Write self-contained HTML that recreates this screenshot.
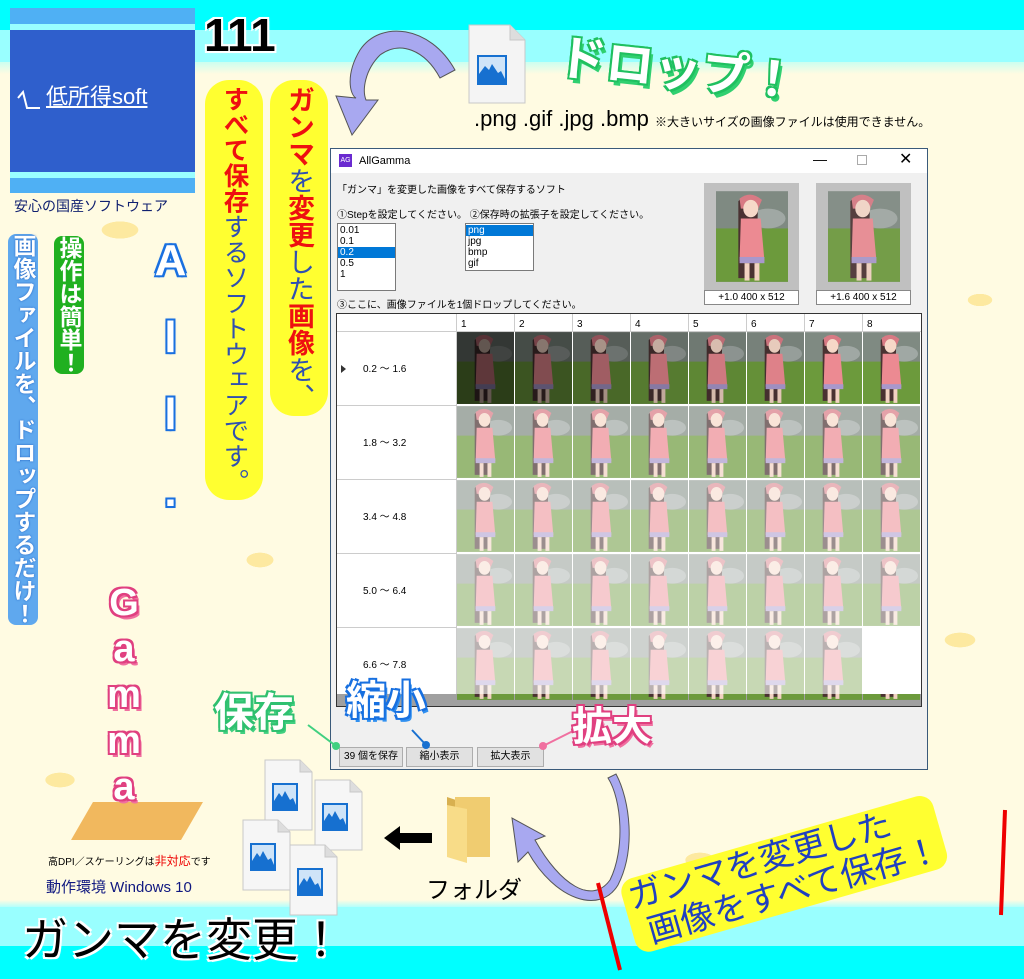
<!DOCTYPE html>
<html><head><meta charset="utf-8"><style>
*{margin:0;padding:0;box-sizing:border-box}
body{width:1024px;height:979px;overflow:hidden;position:relative;font-family:"Liberation Sans","Noto Sans CJK JP",sans-serif;
background:
radial-gradient(ellipse 30px 14px at 120px 230px,#fde9a0 60%,transparent 62%),
radial-gradient(ellipse 20px 10px at 980px 300px,#fde9a0 60%,transparent 62%),
radial-gradient(ellipse 25px 12px at 960px 640px,#fde9a0 60%,transparent 62%),
radial-gradient(ellipse 22px 12px at 260px 560px,#fde9a0 60%,transparent 62%),
radial-gradient(ellipse 24px 12px at 700px 860px,#fde9a0 60%,transparent 62%),
radial-gradient(ellipse 24px 12px at 60px 780px,#fde9a0 60%,transparent 62%),
#fffbe2;}
.a{position:absolute}
.v{writing-mode:vertical-rl;text-orientation:upright;font-weight:bold}
.win{font-family:"Liberation Sans","Noto Sans CJK JP",sans-serif;font-size:10px;color:#000}
.lb{background:#fff;border:1px solid #7a7a7a;font-size:10px;line-height:11px;padding:1px 2px}
.btn{background:#e1e1e1;border:1px solid #adadad;font-size:10px;text-align:center;line-height:18px;height:20px}
.n{color:#3050b0;font-weight:normal}
</style></head><body>
<div class="a" style="left:0;top:0;width:1024px;height:30px;background:#00ffff"></div>
<div class="a" style="left:0;top:30px;width:1024px;height:32px;background:#99ffff"></div>
<div class="a" style="left:0;top:62px;width:1024px;height:12px;background:linear-gradient(#ccfff0,#fffbe2)"></div>
<div class="a" style="left:0;top:900px;width:1024px;height:8px;background:linear-gradient(#fffbe2,#aaffff)"></div>
<div class="a" style="left:0;top:907px;width:1024px;height:40px;background:#99ffff"></div>
<div class="a" style="left:0;top:946px;width:1024px;height:33px;background:#00ffff"></div>

<div class="a" style="left:10px;top:8px;width:185px;height:185px;background:#2f5fcc"></div>
<div class="a" style="left:10px;top:8px;width:185px;height:16px;background:#4fb0f4"></div>
<div class="a" style="left:10px;top:24px;width:185px;height:6px;background:#99ffff"></div>
<div class="a" style="left:10px;top:172px;width:185px;height:6px;background:#99ffff"></div>
<div class="a" style="left:10px;top:178px;width:185px;height:15px;background:#4fb0f4"></div>
<svg class="a" style="left:16px;top:88px" width="26" height="26"><path d="M2 10L7 4L11 20H24" fill="none" stroke="#fff" stroke-width="2"/></svg>
<div class="a" style="left:46px;top:84px;color:#fff;font-size:22px;line-height:26px;white-space:nowrap;text-decoration:underline">低所得soft</div>
<div class="a" style="left:14px;top:196px;color:#102070;font-size:14px;white-space:nowrap">安心の国産ソフトウェア</div>
<div class="a" style="left:204px;top:8px;font-size:46px;font-weight:bold;color:#000;text-shadow:0 0 3px #fff,2px 2px 0 #fff,-2px -2px 0 #fff,2px -2px 0 #fff,-2px 2px 0 #fff">111</div>

<div class="a v" style="left:270px;top:80px;width:58px;font-size:27px;line-height:58px;background:#ffff30;border-radius:24px;padding:6px 0;color:#ee1010">ガンマ<span class="n">を</span>変更<span class="n">した</span>画像<span class="n">を、</span></div>
<div class="a v" style="left:205px;top:80px;width:58px;font-size:25.5px;line-height:58px;background:#ffff30;border-radius:24px;padding:6px 0;color:#ee1010">すべて保存<span class="n">するソフトウェアです。</span></div>
<div class="a v" style="left:8px;top:234px;font-size:23px;line-height:30px;color:#fff;background:#5fa8ee;border-radius:8px;text-shadow:0 0 2px #2060c0">画像ファイルを、ドロップするだけ！</div>
<div class="a v" style="left:54px;top:236px;font-size:23px;line-height:30px;color:#fff;background:#20b020;border-radius:8px">操作は簡単！</div>
<div class="a v" style="left:148px;top:236px;font-size:44px;line-height:44px;color:#fff;text-shadow:0 0 3px #1a70e0,2px 2px 0 #1a70e0,-2px -2px 0 #1a70e0,2px -2px 0 #1a70e0,-2px 2px 0 #1a70e0;letter-spacing:28px">All.</div>
<div class="a" style="left:82px;top:802px;width:110px;height:38px;background:#f0b050;transform:skewX(-30deg);opacity:.9"></div>
<div class="a v" style="left:104px;top:582px;font-size:38px;line-height:40px;color:#fff;text-shadow:0 0 2px #e04080,2px 2px 0 #e04080,-2px -2px 0 #e04080,2px -2px 0 #e04080,-2px 2px 0 #e04080,3px 4px 0 #f070a0;letter-spacing:4px">Gamma</div>

<div class="a" style="left:48px;top:852px;font-size:10px;white-space:nowrap">高DPI／スケーリングは<span style="color:#e00;font-size:12px">非対応</span>です</div>
<div class="a" style="left:46px;top:876px;font-size:15px;color:#101880;white-space:nowrap">動作環境 Windows 10</div>
<div class="a" style="left:22px;top:912px;font-size:46px;line-height:56px;color:#000;white-space:nowrap;text-shadow:0 0 3px #fff,2px 2px 0 #fff,-2px -2px 0 #fff,2px -2px 0 #fff,-2px 2px 0 #fff">ガンマを変更！</div>

<svg class="a" style="left:468px;top:24px" width="58" height="80" viewBox="0 0 58 80"><path d="M1 1H42L57 16V79H1Z" fill="#f4f4f4" stroke="#c8c8c8"/><path d="M42 1V16H57" fill="#ddd" stroke="#c8c8c8"/><rect x="9" y="31" width="30" height="30" fill="#1670d0"/><rect x="11" y="33" width="26" height="26" fill="#cfe4f8"/><path d="M11 59L11 50L17 42L21 46L24 40L30 49L33 47L37 55V59Z" fill="#1670d0"/></svg>
<div class="a" style="left:558px;top:30px;font-size:48px;font-weight:bold;color:#fff;transform:rotate(6deg);white-space:nowrap;text-shadow:0 0 2px #20c060,2px 2px 0 #20c060,-2px -2px 0 #20c060,2px -2px 0 #20c060,-2px 2px 0 #20c060,4px 5px 0 #30d070">ドロップ！</div>
<div class="a" style="left:474px;top:106px;font-size:22px;white-space:nowrap">.png .gif .jpg .bmp <span style="font-size:12px">※大きいサイズの画像ファイルは使用できません。</span></div>

<svg class="a" style="left:0;top:0" width="1024" height="979">
<path d="M455 70C430 25 380 20 360 50C345 75 350 95 356 98L336 96L352 135L378 100L366 100C362 90 365 70 380 55C400 40 425 50 440 78Z" fill="#a8a8f0" stroke="#555" stroke-width="1"/>
<path d="M608 778C622 800 625 850 610 880C592 905 560 885 535 840L545 836L512 818L518 862L528 852C555 900 600 915 618 885C636 850 630 800 616 774Z" fill="#a8a8f0" stroke="#555" stroke-width="1"/>
<path d="M598 883L620 970" stroke="#e00" stroke-width="4"/>
<path d="M1005 810L1001 915" stroke="#e00" stroke-width="4"/>
<path d="M384 838L400 826V833H432V843H400V850Z" fill="#000"/>
</svg>

<svg class="a" style="left:240px;top:755px" width="140" height="165" viewBox="0 0 140 165">
<g id="fi"><path d="M25 5H60L72 17V75H25Z" fill="#f6f6f6" stroke="#c8c8c8"/><path d="M60 5V17H72" fill="#ddd" stroke="#c8c8c8"/><rect x="32" y="28" width="26" height="28" fill="#1670d0"/><rect x="34" y="30" width="22" height="24" fill="#cfe4f8"/><path d="M34 54V46L39 38L42 42L45 36L50 45L53 43L56 50V54Z" fill="#1670d0"/></g>
<use href="#fi" x="50" y="20"/><use href="#fi" x="-22" y="60"/><use href="#fi" x="25" y="85"/>
</svg>
<svg class="a" style="left:445px;top:795px" width="50" height="70"><path d="M2 2L20 8V66L2 58Z" fill="#d8b050"/><path d="M10 2H45V62H10Z" fill="#f0cc70"/><path d="M2 10L22 14V68L2 62Z" fill="#f8dc88"/></svg>
<div class="a" style="left:426px;top:870px;font-size:24px;white-space:nowrap">フォルダ</div>

<div class="a" style="left:618px;top:882px;font-size:34px;line-height:38px;color:#2040c0;transform:rotate(-16deg);transform-origin:left top;background:#ffff30;border-radius:14px;padding:0 6px;white-space:nowrap">ガンマを変更した<br>&nbsp;画像をすべて保存！</div>

<div class="a win" style="left:330px;top:148px;width:598px;height:622px;background:#f0f0f0;border:1px solid #3a5a7a">
 <div class="a" style="left:0;top:0;width:596px;height:24px;background:#fff"></div>
 <div class="a" style="left:8px;top:5px;width:13px;height:13px;background:#6a2ad0;color:#fff;font-size:7px;line-height:13px;text-align:center">AG</div>
 <div class="a" style="left:28px;top:6px;font-size:11px">AllGamma</div>
 <div class="a" style="left:482px;top:2px;font-size:14px">—</div>
 <div class="a" style="left:526px;top:6px;width:10px;height:10px;border:1px solid #aaa"></div>
 <div class="a" style="left:568px;top:0px;font-size:16px">✕</div>
 <div class="a" style="left:6px;top:32px">「ガンマ」を変更した画像をすべて保存するソフト</div>
 <div class="a" style="left:6px;top:57px;white-space:nowrap">①Stepを設定してください。 ②保存時の拡張子を設定してください。</div>
 <div class="a lb" style="left:6px;top:74px;width:59px;height:68px">0.01<br>0.1<br><div style="background:#0078d7;color:#fff;margin:0 -2px;padding:0 2px">0.2</div>0.5<br>1</div>
 <div class="a lb" style="left:134px;top:74px;width:69px;height:48px"><div style="background:#0078d7;color:#fff;margin:0 -2px;padding:0 2px">png</div>jpg<br>bmp<br>gif</div>
 <div class="a" style="left:6px;top:147px">③ここに、画像ファイルを1個ドロップしてください。</div>
 <svg class="a" style="left:373px;top:34px" width="95" height="107"><rect width="95" height="107" fill="#c0c0c0"/><use href="#girl" x="12" y="0" width="72" height="107"/></svg>
 <svg class="a" style="left:485px;top:34px" width="95" height="107"><rect width="95" height="107" fill="#c0c0c0"/><use href="#girl" x="12" y="0" width="72" height="107" opacity=".9"/></svg>
 <div class="a" style="left:373px;top:141px;width:95px;height:15px;background:#fff;border:1px solid #888;text-align:center;line-height:13px">+1.0 400 x 512</div>
 <div class="a" style="left:485px;top:141px;width:95px;height:15px;background:#fff;border:1px solid #888;text-align:center;line-height:13px">+1.6 400 x 512</div>
 <div class="a" style="left:5px;top:164px;width:586px;height:394px;background:#a0a0a0;border:1px solid #333"></div>
 <svg class="a" style="left:6px;top:165px" width="584" height="392" viewBox="0 0 584 392">
  <defs>
   <symbol id="girl" viewBox="0 0 58 73">
    <rect width="58" height="73" fill="#7f8a82"/><rect y="30" width="58" height="43" fill="#6c9a3c"/>
    <ellipse cx="42" cy="22" rx="14" ry="8" fill="#a0a8a4"/>
    <path d="M18 8Q26 0 34 6L32 70L18 70Z" fill="#4a3232"/>
    <path d="M19 6Q28 -1 37 7L34 14H20Z" fill="#d87a84"/>
    <ellipse cx="28" cy="14" rx="6" ry="7" fill="#f6d8c8"/>
    <path d="M20 22H36L39 56H19Z" fill="#ec8a92"/>
    <rect x="19" y="53" width="20" height="5" fill="#a898cc"/>
    <rect x="23" y="58" width="4" height="14" fill="#f2d2c2"/><rect x="31" y="58" width="4" height="14" fill="#f2d2c2"/>
   </symbol>
  </defs>
  <rect width="584" height="392" fill="#fff"/>
  <rect x="0" y="380" width="584" height="12" fill="#a0a0a0"/>
  <g id="row">
   <use href="#girl" x="120" y="18" width="57" height="72"/><use href="#girl" x="178" y="18" width="57" height="72"/><use href="#girl" x="236" y="18" width="57" height="72"/><use href="#girl" x="294" y="18" width="57" height="72"/><use href="#girl" x="352" y="18" width="57" height="72"/><use href="#girl" x="410" y="18" width="57" height="72"/><use href="#girl" x="468" y="18" width="57" height="72"/><use href="#girl" x="526" y="18" width="57" height="72"/>
  </g>
  <rect x="120" y="18" width="57" height="72" fill="#000" opacity=".6"/><rect x="178" y="18" width="57" height="72" fill="#000" opacity=".45"/><rect x="236" y="18" width="57" height="72" fill="#000" opacity=".32"/><rect x="294" y="18" width="57" height="72" fill="#000" opacity=".2"/><rect x="352" y="18" width="57" height="72" fill="#000" opacity=".12"/><rect x="410" y="18" width="57" height="72" fill="#000" opacity=".06"/>
  <use href="#row" y="74"/><use href="#row" y="148"/><use href="#row" y="222"/><use href="#row" y="296"/>
  <rect x="120" y="92" width="464" height="72" fill="#fff" opacity=".3"/>
  <rect x="120" y="166" width="464" height="72" fill="#fff" opacity=".45"/>
  <rect x="120" y="240" width="464" height="72" fill="#fff" opacity=".55"/>
  <rect x="120" y="314" width="406" height="66" fill="#fff" opacity=".62"/>
  <rect x="526" y="314" width="58" height="66" fill="#fff"/>
  <g stroke="#ccc" stroke-width="1"><path d="M0 17.5H584M0 91.5H120M0 165.5H120M0 239.5H120M0 313.5H120M119.5 0V380M177.5 0V17M235.5 0V17M293.5 0V17M351.5 0V17M409.5 0V17M467.5 0V17M525.5 0V17"/></g>
  <g font-size="10" font-family="Liberation Sans,sans-serif"><text x="124" y="13">1</text><text x="182" y="13">2</text><text x="240" y="13">3</text><text x="298" y="13">4</text><text x="356" y="13">5</text><text x="414" y="13">6</text><text x="472" y="13">7</text><text x="530" y="13">8</text>
  <path d="M4 51L9 55L4 59Z" fill="#333"/>
  <text x="26" y="58">0.2 ～ 1.6</text><text x="26" y="132">1.8 ～ 3.2</text><text x="26" y="206">3.4 ～ 4.8</text><text x="26" y="280">5.0 ～ 6.4</text><text x="26" y="354">6.6 ～ 7.8</text></g>
 </svg>
 <div class="a btn" style="left:8px;top:598px;width:64px">39 個を保存</div>
 <div class="a btn" style="left:75px;top:598px;width:67px">縮小表示</div>
 <div class="a btn" style="left:146px;top:598px;width:67px">拡大表示</div>
</div>

<svg class="a" style="left:0;top:0" width="1024" height="979"><path d="M308 725L336 746" stroke="#40d080" stroke-width="2"/><circle cx="336" cy="746" r="4" fill="#40d080"/><path d="M412 730L426 745" stroke="#1870d0" stroke-width="2"/><circle cx="426" cy="745" r="4" fill="#1870d0"/><path d="M575 730L543 746" stroke="#f070a0" stroke-width="2"/><circle cx="543" cy="746" r="4" fill="#f070a0"/></svg>
<div class="a" style="left:214px;top:680px;font-size:40px;font-weight:bold;color:#fff;white-space:nowrap;text-shadow:0 0 2px #30c070,2px 2px 0 #30c070,-2px -2px 0 #30c070,2px -2px 0 #30c070,-2px 2px 0 #30c070,3px 4px 0 #40d080">保存</div>
<div class="a" style="left:346px;top:668px;font-size:40px;font-weight:bold;color:#fff;white-space:nowrap;text-shadow:0 0 2px #1870e0,2px 2px 0 #1870e0,-2px -2px 0 #1870e0,2px -2px 0 #1870e0,-2px 2px 0 #1870e0,3px 4px 0 #3090f0">縮小</div>
<div class="a" style="left:572px;top:694px;font-size:40px;font-weight:bold;color:#fff;white-space:nowrap;text-shadow:0 0 2px #e04080,2px 2px 0 #e04080,-2px -2px 0 #e04080,2px -2px 0 #e04080,-2px 2px 0 #e04080,3px 4px 0 #f070a0">拡大</div>
</body></html>
